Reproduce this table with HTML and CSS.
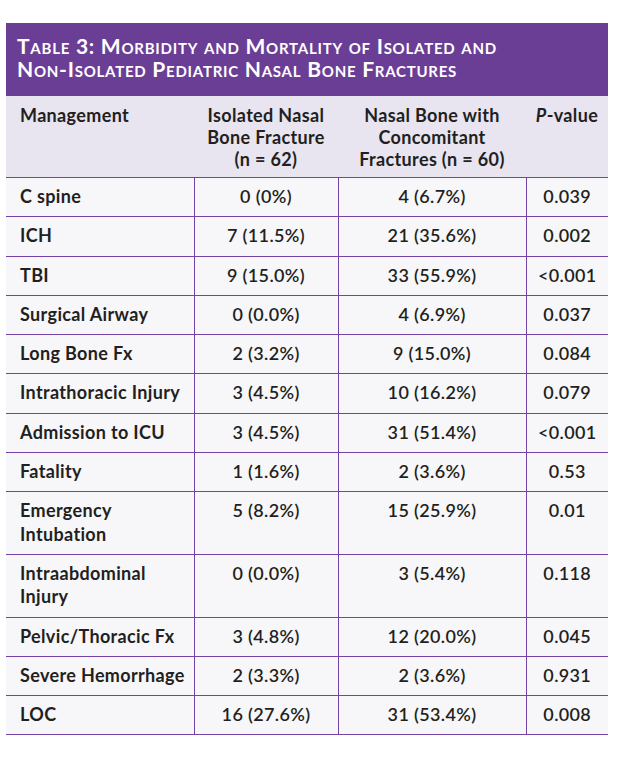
FILE: index.html
```html
<!DOCTYPE html>
<html lang="en">
<head>
<meta charset="utf-8">
<link rel="stylesheet" href="styles.css">
<title>Table 3</title>
</head>
<body>
<div class="figure">
  <div class="caption">Table 3: Morbidity and Mortality of Isolated and<br>Non-Isolated Pediatric Nasal Bone Fractures</div>
  <table class="data">
    <colgroup>
      <col class="c1"><col class="c2"><col class="c3"><col class="c4">
    </colgroup>
    <thead>
      <tr>
        <th class="left">Management</th>
        <th>Isolated Nasal<br>Bone Fracture<br>(n = 62)</th>
        <th>Nasal Bone with<br>Concomitant<br>Fractures (n = 60)</th>
        <th><i>P</i>-value</th>
      </tr>
    </thead>
    <tbody>
      <tr><td class="label">C spine</td><td>0 (0%)</td><td>4 (6.7%)</td><td>0.039</td></tr>
      <tr><td class="label">ICH</td><td>7 (11.5%)</td><td>21 (35.6%)</td><td>0.002</td></tr>
      <tr><td class="label">TBI</td><td>9 (15.0%)</td><td>33 (55.9%)</td><td>&lt;0.001</td></tr>
      <tr><td class="label">Surgical Airway</td><td>0 (0.0%)</td><td>4 (6.9%)</td><td>0.037</td></tr>
      <tr><td class="label">Long Bone Fx</td><td>2 (3.2%)</td><td>9 (15.0%)</td><td>0.084</td></tr>
      <tr><td class="label">Intrathoracic Injury</td><td>3 (4.5%)</td><td>10 (16.2%)</td><td>0.079</td></tr>
      <tr><td class="label">Admission to ICU</td><td>3 (4.5%)</td><td>31 (51.4%)</td><td>&lt;0.001</td></tr>
      <tr><td class="label">Fatality</td><td>1 (1.6%)</td><td>2 (3.6%)</td><td>0.53</td></tr>
      <tr><td class="label">Emergency<br>Intubation</td><td>5 (8.2%)</td><td>15 (25.9%)</td><td>0.01</td></tr>
      <tr><td class="label">Intraabdominal<br>Injury</td><td>0 (0.0%)</td><td>3 (5.4%)</td><td>0.118</td></tr>
      <tr><td class="label">Pelvic/Thoracic Fx</td><td>3 (4.8%)</td><td>12 (20.0%)</td><td>0.045</td></tr>
      <tr><td class="label">Severe Hemorrhage</td><td>2 (3.3%)</td><td>2 (3.6%)</td><td>0.931</td></tr>
      <tr><td class="label">LOC</td><td>16 (27.6%)</td><td>31 (53.4%)</td><td>0.008</td></tr>
    </tbody>
  </table>
</div>
</body>
</html>
```

FILE: styles.css
```css
html, body {
  margin: 0;
  padding: 0;
  background: #ffffff;
}

body {
  font-family: "Lato", "Noto Sans", sans-serif;
  color: #231f20;
}

.figure {
  width: 602px;
  margin: 23px 0 0 6px;
}

.caption {
  background: #6b3e96;
  color: #ffffff;
  font-weight: 700;
  font-variant: small-caps;
  font-size: 21px;
  line-height: 23px;
  height: 73px;
  box-sizing: border-box;
  padding: 11px 0 0 11px;
  letter-spacing: 0.75px;
}

.data {
  width: 602px;
  border-collapse: collapse;
  table-layout: fixed;
  font-size: 18px;
  letter-spacing: 0.35px;
}

.c1 { width: 188px; }
.c2 { width: 144px; }
.c3 { width: 188px; }
.c4 { width: 82px; }

.data thead tr {
  background: #e8e4f0;
}

.data th {
  font-weight: 700;
  text-align: center;
  vertical-align: top;
  line-height: 22px;
  padding: 8px 2px 7px;
  border-bottom: 1px solid #7443a6;
}

.data th.left {
  text-align: left;
  padding-left: 14px;
}

.data tbody tr {
  background: #f7f7f9;
}

.data td {
  text-align: center;
  vertical-align: top;
  font-weight: 600;
  line-height: 23.5px;
  padding: 7px 2px 7.75px;
  border-bottom: 1px solid #7443a6;
  border-left: 1px solid #7443a6;
}

.data td.label {
  text-align: left;
  font-weight: 700;
  padding-left: 14px;
  border-left: none;
}
```
